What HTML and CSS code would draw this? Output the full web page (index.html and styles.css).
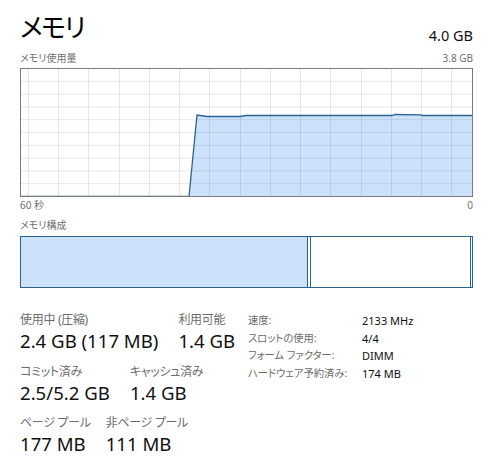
FILE: index.html
```html
<!DOCTYPE html>
<html lang="ja">
<head>
<meta charset="utf-8">
<title>メモリ</title>
<link rel="stylesheet" href="styles.css">
</head>
<body>
<div class="page">
  <div class="header">
    <div class="title">メモリ</div>
    <div class="total">4.0 GB</div>
  </div>
  <div class="caption-row">
    <span>メモリ使用量</span>
    <span>3.8 GB</span>
  </div>
  <svg class="chart" width="453" height="129" viewBox="0 0 453 129">
    <rect x="0" y="0" width="453" height="129" fill="#ffffff"/>
    <polygon class="fill" points="169,128.5 177,47 187,48.5 220,48.5 226,47.5 372,47.5 375,46.5 400,46.8 403,47.5 453,47.5 453,128.5"/>
    <g class="grid">
      <line x1="8.5" y1="0" x2="8.5" y2="129"/>
      <line x1="38.5" y1="0" x2="38.5" y2="129"/>
      <line x1="68.5" y1="0" x2="68.5" y2="129"/>
      <line x1="99.5" y1="0" x2="99.5" y2="129"/>
      <line x1="129.5" y1="0" x2="129.5" y2="129"/>
      <line x1="159.5" y1="0" x2="159.5" y2="129"/>
      <line x1="189.5" y1="0" x2="189.5" y2="129"/>
      <line x1="220.5" y1="0" x2="220.5" y2="129"/>
      <line x1="250.5" y1="0" x2="250.5" y2="129"/>
      <line x1="280.5" y1="0" x2="280.5" y2="129"/>
      <line x1="310.5" y1="0" x2="310.5" y2="129"/>
      <line x1="341.5" y1="0" x2="341.5" y2="129"/>
      <line x1="371.5" y1="0" x2="371.5" y2="129"/>
      <line x1="401.5" y1="0" x2="401.5" y2="129"/>
      <line x1="431.5" y1="0" x2="431.5" y2="129"/>
      <line x1="0" y1="13.3" x2="453" y2="13.3"/>
      <line x1="0" y1="26.1" x2="453" y2="26.1"/>
      <line x1="0" y1="38.9" x2="453" y2="38.9"/>
      <line x1="0" y1="51.7" x2="453" y2="51.7"/>
      <line x1="0" y1="64.5" x2="453" y2="64.5"/>
      <line x1="0" y1="77.3" x2="453" y2="77.3"/>
      <line x1="0" y1="90.1" x2="453" y2="90.1"/>
      <line x1="0" y1="102.9" x2="453" y2="102.9"/>
      <line x1="0" y1="115.7" x2="453" y2="115.7"/>
    </g>
    <polyline class="line" points="0,128.5 169,128.5 177,47 187,48.5 220,48.5 226,47.5 372,47.5 375,46.5 400,46.8 403,47.5 453,47.5"/>
    <rect class="frame" x="0.5" y="0.5" width="452" height="128"/>
  </svg>
  <div class="caption-row axis">
    <span>60 秒</span>
    <span>0</span>
  </div>
  <div class="caption">メモリ構成</div>
  <div class="composition">
    <div class="seg seg-inuse"></div>
    <div class="seg seg-modified"></div>
    <div class="seg seg-standby"></div>
    <div class="seg seg-free"></div>
  </div>
  <div class="stats">
    <div class="stat-block">
      <div class="stat-row">
        <div class="stat">
          <div class="label">使用中 (圧縮)</div>
          <div class="value">2.4 GB (117 MB)</div>
        </div>
        <div class="stat">
          <div class="label">利用可能</div>
          <div class="value">1.4 GB</div>
        </div>
      </div>
      <div class="stat-row">
        <div class="stat">
          <div class="label">コミット済み</div>
          <div class="value">2.5/5.2 GB</div>
        </div>
        <div class="stat">
          <div class="label">キャッシュ済み</div>
          <div class="value">1.4 GB</div>
        </div>
      </div>
      <div class="stat-row">
        <div class="stat">
          <div class="label">ページ プール</div>
          <div class="value">177 MB</div>
        </div>
        <div class="stat">
          <div class="label">非ページ プール</div>
          <div class="value">111 MB</div>
        </div>
      </div>
    </div>
    <div class="details">
      <div class="dkey">速度:</div><div class="dval">2133 MHz</div>
      <div class="dkey">スロットの使用:</div><div class="dval">4/4</div>
      <div class="dkey">フォーム ファクター:</div><div class="dval">DIMM</div>
      <div class="dkey">ハードウェア予約済み:</div><div class="dval">174 MB</div>
    </div>
  </div>
</div>
</body>
</html>
```
FILE: styles.css
```css
html, body {
  margin: 0;
  padding: 0;
  background: #ffffff;
}

body {
  font-family: "Noto Sans", "Noto Sans CJK JP", sans-serif;
  font-feature-settings: "palt";
  color: #000000;
}

.page {
  width: 453px;
  padding: 0 21px 0 20px;
}

.header {
  display: flex;
  justify-content: space-between;
  align-items: flex-end;
  height: 50px;
}

.title {
  font-size: 26px;
  line-height: 32px;
  letter-spacing: -1.5px;
  margin-bottom: 7px;
  color: #000;
}

.total {
  font-size: 14.5px;
  line-height: 18px;
  margin-bottom: 6px;
  color: #111;
}

.caption-row {
  display: flex;
  justify-content: space-between;
  font-size: 10px;
  line-height: 16px;
  height: 16px;
  color: #707070;
}

.chart {
  display: block;
  margin-top: 2px;
}

.chart .fill {
  fill: #cce2fa;
}

.chart .grid line {
  stroke: rgba(0, 0, 0, 0.09);
  stroke-width: 1;
}

.chart .line {
  fill: none;
  stroke: #2a6496;
  stroke-width: 1.3;
}

.chart .frame {
  fill: none;
  stroke: #7a7a7a;
  stroke-width: 1;
}

.axis {
  margin-top: 1px;
  height: 14px;
  line-height: 14px;
}

.caption {
  margin-top: 6px;
  font-size: 10px;
  line-height: 14px;
  color: #707070;
}

.composition {
  display: flex;
  margin-top: 4px;
  height: 52px;
}

.seg {
  box-sizing: border-box;
  height: 52px;
  border-top: 1px solid #2b6390;
  border-bottom: 1px solid #2b6390;
  border-right: 1px solid #2b6390;
}

.seg-inuse {
  width: 288px;
  border-left: 1px solid #2b6390;
  background: #cce2fa;
}

.seg-modified {
  width: 3px;
}

.seg-standby {
  width: 160px;
}

.seg-free {
  width: 2px;
}

.stats {
  display: grid;
  grid-template-columns: 228px auto;
  margin-top: 24px;
}

.stat-block {
  display: flex;
  flex-direction: column;
  gap: 9.5px;
}

.stat-row {
  display: flex;
  gap: 20px;
}

.label {
  width: 0;
  overflow: visible;
  font-size: 12px;
  line-height: 16px;
  letter-spacing: -0.3px;
  color: #6b6b6b;
  white-space: nowrap;
}

.value {
  font-size: 18.6px;
  line-height: 26px;
  color: #111;
  white-space: nowrap;
}

.details {
  display: grid;
  grid-template-columns: 114px auto;
  grid-auto-rows: 17.5px;
  align-content: start;
  line-height: 17.5px;
}

.dkey {
  font-size: 10.3px;
  color: #6b6b6b;
  white-space: nowrap;
}

.dval {
  font-size: 11px;
  color: #111;
  white-space: nowrap;
}
```
